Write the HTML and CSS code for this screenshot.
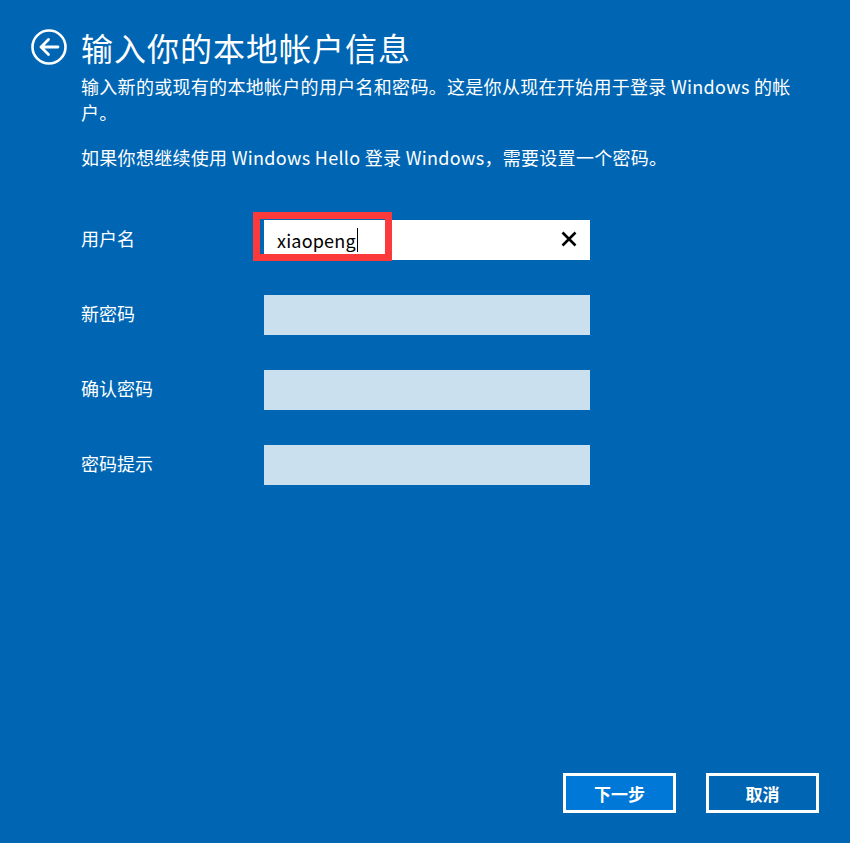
FILE: index.html
```html
<!DOCTYPE html>
<html lang="zh-CN">
<head>
<meta charset="utf-8">
<title>输入你的本地帐户信息</title>
<link rel="stylesheet" href="styles.css">
</head>
<body>
<div class="page">
  <header class="header">
    <svg class="back" width="36" height="36" viewBox="0 0 36 36" aria-hidden="true">
      <circle cx="18" cy="18" r="16.5" fill="none" stroke="#fff" stroke-width="2.6"/>
      <path d="M10 18 H27 M17.5 10.5 L10 18 L17.5 25.5" fill="none" stroke="#fff" stroke-width="2.8" stroke-linecap="round" stroke-linejoin="round"/>
    </svg>
    <h1 class="title">输入你的本地帐户信息</h1>
  </header>
  <div class="content">
    <p class="desc desc-first">输入新的或现有的本地帐户的用户名和密码。这是你从现在开始用于登录 Windows 的帐户。</p>
    <p class="desc">如果你想继续使用 Windows Hello 登录 Windows，需要设置一个密码。</p>
    <div class="form">
      <div class="label">用户名</div>
      <div class="field field-active">
        <span class="value">xiaopeng</span><span class="caret"></span>
        <svg class="clear" width="16" height="16" viewBox="0 0 16 16" aria-hidden="true">
          <path d="M1.5 1.5 L14.5 14.5 M14.5 1.5 L1.5 14.5" stroke="#000" stroke-width="2.6"/>
        </svg>
        <div class="highlight"></div>
      </div>
      <div class="label">新密码</div>
      <div class="field"></div>
      <div class="label">确认密码</div>
      <div class="field"></div>
      <div class="label">密码提示</div>
      <div class="field"></div>
    </div>
  </div>
  <footer class="footer">
    <button class="btn btn-primary">下一步</button>
    <button class="btn">取消</button>
  </footer>
</div>
</body>
</html>
```

FILE: styles.css
```css
html, body {
  margin: 0;
  padding: 0;
}
body {
  background: #0066b3;
  color: #fff;
  font-family: "Noto Sans CJK SC", "Noto Sans", sans-serif;
}
.page {
  min-height: 843px;
  box-sizing: border-box;
  display: flex;
  flex-direction: column;
  padding: 29px 31px 30px 31px;
}
.header {
  display: flex;
  align-items: center;
  gap: 14px;
  height: 36px;
}
.back {
  flex: none;
}
.title {
  margin: 0;
  font-size: 32px;
  font-weight: 400;
  line-height: 36px;
  letter-spacing: 1px;
}
.content {
  padding-left: 50px;
  margin-top: 8px;
}
.desc {
  margin: 0;
  font-size: 18px;
  line-height: 26px;
  letter-spacing: 0.3px;
  max-width: 722px;
}
.desc-first {
  margin-bottom: 19px;
}
.form {
  margin-top: 50px;
  display: grid;
  grid-template-columns: 183px 326px;
  grid-auto-rows: 40px;
  row-gap: 35px;
  align-items: center;
}
.label {
  font-size: 18px;
  padding-bottom: 4px;
}
.field {
  height: 40px;
  background: #cbe0ee;
  position: relative;
  display: flex;
  align-items: center;
}
.field-active {
  background: #fff;
  color: #000;
  padding-left: 13px;
  box-sizing: border-box;
}
.value {
  font-size: 18px;
  line-height: 22px;
  letter-spacing: 0.2px;
}
.caret {
  display: inline-block;
  width: 1px;
  height: 24px;
  background: #000;
  margin-left: 1px;
}
.clear {
  position: absolute;
  right: 13px;
  top: 11px;
}
.highlight {
  position: absolute;
  left: -11px;
  top: -8px;
  width: 139px;
  height: 49px;
  box-sizing: border-box;
  border: 7px solid #fb3a3c;
}
.footer {
  margin-top: auto;
  display: flex;
  justify-content: flex-end;
  gap: 30px;
}
.btn {
  width: 113px;
  height: 40px;
  box-sizing: border-box;
  border: 3px solid #fff;
  background: #0066b3;
  color: #fff;
  font-family: "Noto Sans CJK SC", sans-serif;
  font-size: 17px;
  font-weight: 700;
  padding: 0;
}
.btn-primary {
  background: #0078d7;
}
```
